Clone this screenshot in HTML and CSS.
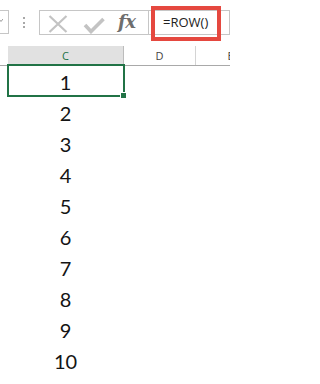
FILE: index.html
```html
<!DOCTYPE html>
<html>
<head>
<meta charset="utf-8">
<link rel="stylesheet" href="styles.css">
</head>
<body>
<div class="page">
  <div class="fbar">
    <div class="namebox">
      <svg class="nb-arrow" width="4" height="3" viewBox="0 0 4 3"><path d="M0 0L2 2.5L4 0" fill="none" stroke="#9a9a9a" stroke-width="1"/></svg>
    </div>
    <div class="dots"><i></i><i></i><i></i></div>
    <div class="fbtns">
      <svg class="ico-x" width="20" height="18" viewBox="0 0 20 18"><path d="M1.5 1L18.5 17M18.5 1L1.5 17" fill="none" stroke="#c3c3c3" stroke-width="2.2"/></svg>
      <svg class="ico-check" width="22" height="17" viewBox="0 0 22 17"><polyline points="2,8 8,14.5 20.5,2" fill="none" stroke="#c3c3c3" stroke-width="3.6" stroke-linejoin="miter"/></svg>
      <span class="fx">fx</span>
    </div>
    <div class="finput">=ROW()</div>
    <div class="annot"></div>
  </div>
  <div class="colheads">
    <div class="ch-spacer"></div>
    <div class="ch ch-c">C</div>
    <div class="ch ch-d">D</div>
    <div class="ch ch-e">E</div>
  </div>
  <div class="grid">
    <div class="row"><div class="sp"></div><div class="cell">1</div></div>
    <div class="row"><div class="sp"></div><div class="cell">2</div></div>
    <div class="row"><div class="sp"></div><div class="cell">3</div></div>
    <div class="row"><div class="sp"></div><div class="cell">4</div></div>
    <div class="row"><div class="sp"></div><div class="cell">5</div></div>
    <div class="row"><div class="sp"></div><div class="cell">6</div></div>
    <div class="row"><div class="sp"></div><div class="cell">7</div></div>
    <div class="row"><div class="sp"></div><div class="cell">8</div></div>
    <div class="row"><div class="sp"></div><div class="cell">9</div></div>
    <div class="row"><div class="sp"></div><div class="cell">10</div></div>
    <div class="selection"><span class="handle"></span></div>
  </div>
</div>
</body>
</html>
```

FILE: styles.css
```css
* { box-sizing: border-box; }
html, body {
  margin: 0;
  padding: 0;
  background: #ffffff;
}
.page {
  width: 230px;
  height: 384px;
  overflow: hidden;
  position: relative;
  font-family: "Open Sans", "Liberation Sans", sans-serif;
}
.fbar {
  position: relative;
  height: 46px;
  display: flex;
  align-items: flex-start;
}
.namebox {
  flex: 0 0 9px;
  width: 9px;
  height: 24px;
  margin-top: 10px;
  border: 1px solid #c6c6c6;
  border-left: none;
  display: flex;
  align-items: flex-start;
}
.nb-arrow {
  display: block;
  margin-top: 8px;
  margin-left: -1px;
}
.dots {
  flex: 0 0 2px;
  margin-left: 14px;
  margin-top: 17px;
  display: flex;
  flex-direction: column;
  gap: 2.5px;
}
.dots i {
  display: block;
  width: 2px;
  height: 2px;
  background: #a8a8a8;
}
.fbtns {
  flex: 0 0 110px;
  width: 110px;
  height: 25px;
  margin-left: 14px;
  margin-top: 10px;
  border: 1px solid #c6c6c6;
  display: flex;
  align-items: flex-start;
}
.ico-x {
  display: block;
  margin-left: 8px;
  margin-top: 4px;
}
.ico-check {
  display: block;
  margin-left: 15px;
  margin-top: 6px;
}
.fx {
  margin-left: 13px;
  margin-top: 0px;
  font-family: "DejaVu Serif", "Liberation Serif", serif;
  font-style: italic;
  font-weight: bold;
  font-size: 18px;
  line-height: 22px;
  color: #6e6e6e;
  letter-spacing: -0.5px;
}
.finput {
  flex: 1 1 auto;
  height: 25px;
  margin-top: 10px;
  border: 1px solid #c6c6c6;
  border-left: none;
  padding-left: 14px;
  font-size: 13px;
  line-height: 22px;
  color: #222222;
  white-space: nowrap;
}
.annot {
  position: absolute;
  left: 151px;
  top: 6px;
  width: 70px;
  height: 35px;
  border: 4px solid #e5483f;
}
.colheads {
  display: flex;
  height: 20px;
  border-bottom: 1px solid #a9a9a9;
  font-size: 11px;
  line-height: 19px;
}
.ch-spacer {
  flex: 0 0 8px;
}
.ch {
  text-align: center;
  border-right: 1px solid #d4d4d4;
  color: #444444;
  white-space: nowrap;
}
.ch-c {
  flex: 0 0 116px;
  background: #e1e1e1;
  border-right-color: #bcbcbc;
  color: #217346;
}
.ch-d {
  flex: 0 0 72px;
}
.ch-e {
  flex: 0 0 70px;
}
.grid {
  position: relative;
}
.row {
  display: flex;
  height: 31px;
}
.sp {
  flex: 0 0 8px;
}
.cell {
  flex: 0 0 115px;
  text-align: center;
  font-family: "Lato", "Open Sans", sans-serif;
  font-size: 20px;
  line-height: 31px;
  padding-top: 1px;
  color: #141414;
}
.selection {
  position: absolute;
  left: 7px;
  top: -2px;
  width: 118px;
  height: 33px;
  border: 2px solid #217346;
}
.handle {
  position: absolute;
  left: 111px;
  top: 26px;
  width: 7px;
  height: 7px;
  background: #217346;
  border: 1px solid #ffffff;
}
```
